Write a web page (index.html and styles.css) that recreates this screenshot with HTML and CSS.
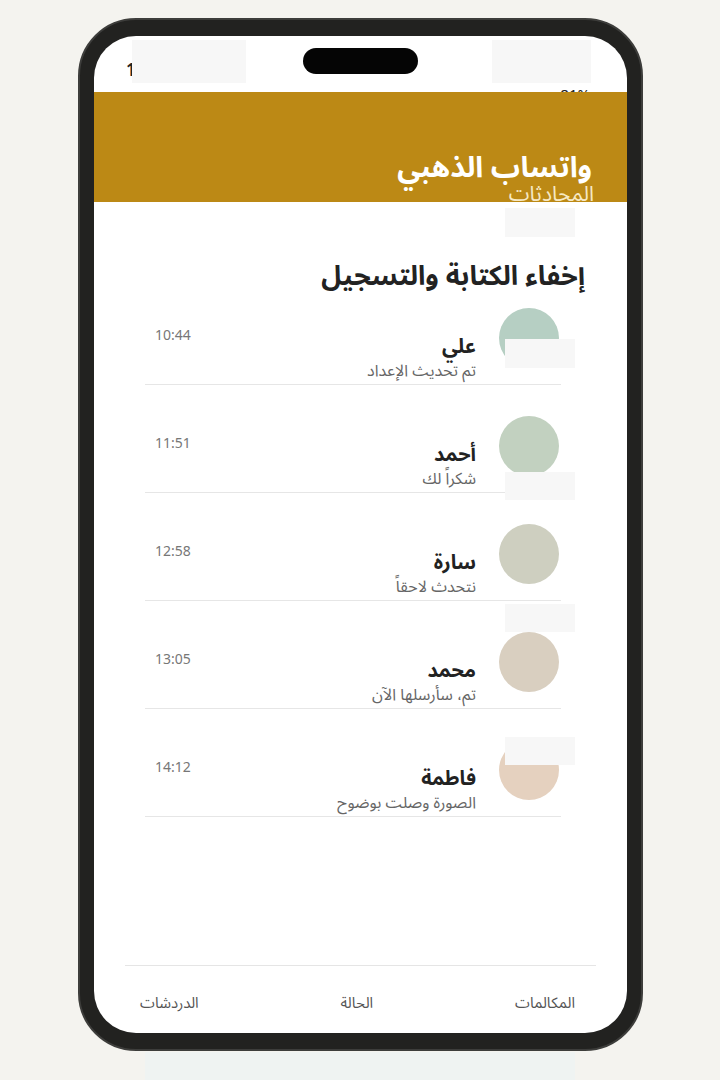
FILE: index.html
```html
<!DOCTYPE html>
<html lang="ar">
<head>
<meta charset="utf-8">
<title>واتساب الذهبي</title>
<link rel="stylesheet" href="styles.css">
</head>
<body>
<div class="phone">
  <div class="screen">
    <div class="island"></div>
    <div class="statusbar">
      <span class="time">10:44</span>
      <span class="battery">81%</span>
    </div>
    <header class="appbar">
      <div class="title">واتساب الذهبي</div>
      <div class="subtitle">المحادثات</div>
    </header>
    <main class="content">
      <h2 class="section">إخفاء الكتابة والتسجيل</h2>
      <ul class="chats">
        <li class="chat">
          <div class="avatar a1"></div>
          <div class="text"><div class="name">علي</div><div class="msg">تم تحديث الإعداد</div></div>
          <div class="when">10:44</div>
        </li>
        <li class="chat">
          <div class="avatar a2"></div>
          <div class="text"><div class="name">أحمد</div><div class="msg">شكراً لك</div></div>
          <div class="when">11:51</div>
        </li>
        <li class="chat">
          <div class="avatar a3"></div>
          <div class="text"><div class="name">سارة</div><div class="msg">نتحدث لاحقاً</div></div>
          <div class="when">12:58</div>
        </li>
        <li class="chat">
          <div class="avatar a4"></div>
          <div class="text"><div class="name">محمد</div><div class="msg">تم، سأرسلها الآن</div></div>
          <div class="when">13:05</div>
        </li>
        <li class="chat">
          <div class="avatar a5"></div>
          <div class="text"><div class="name">فاطمة</div><div class="msg">الصورة وصلت بوضوح</div></div>
          <div class="when">14:12</div>
        </li>
      </ul>
    </main>
    <nav class="tabs">
      <span class="tab">المكالمات</span>
      <span class="tab">الحالة</span>
      <span class="tab">الدردشات</span>
    </nav>
  </div>
</div>
<div class="mask m-tl"></div>
<div class="mask m-tr"></div>
<div class="mask m-c1"></div>
<div class="mask m-c2"></div>
<div class="mask m-c3"></div>
<div class="mask m-c4"></div>
<div class="mask m-c5"></div>
<div class="mask m-bottom"></div>
</body>
</html>
```
FILE: styles.css
```css
* { box-sizing: border-box; }
html, body { margin: 0; padding: 0; }
body {
  background: #f4f3ef;
  font-family: "Noto Sans", "Noto Sans Arabic", "Noto Kufi Arabic", "DejaVu Sans", sans-serif;
  width: 720px;
  height: 1080px;
  overflow: hidden;
  position: relative;
}
.phone {
  margin: 18px 0 0 78px;
  width: 565px;
  height: 1033px;
  background: #222220;
  border: 2px solid #3d3d3b;
  border-radius: 58px;
  padding: 16px 14px;
}
.screen {
  width: 100%;
  height: 100%;
  background: #fff;
  border-radius: 42px;
  overflow: hidden;
  position: relative;
  display: flex;
  flex-direction: column;
}
.island {
  position: absolute;
  top: 12px;
  left: 209px;
  width: 115px;
  height: 26px;
  background: #050505;
  border-radius: 13px;
  z-index: 3;
}
.statusbar {
  height: 56px;
  flex: none;
  display: flex;
  justify-content: space-between;
  padding: 0 37px 0 32px;
  color: #222;
  position: relative;
  z-index: 0;
}
.time { font-size: 17px; line-height: 20px; margin-top: 24px; font-weight: 600; }
.battery { font-size: 15px; line-height: 18px; margin-top: 49px; }
.appbar {
  height: 110px;
  flex: none;
  background: #bc8915;
  position: relative;
  z-index: 1;
  direction: rtl;
  padding: 0 35px 0 0;
  display: flex;
  flex-direction: column;
  justify-content: flex-end;
  overflow: hidden;
}
.title {
  color: #fff;
  font-size: 29px;
  font-weight: 700;
  line-height: 32px;
}
.subtitle {
  color: #f6e8c4;
  font-size: 21px;
  line-height: 22px;
  margin-bottom: -2px;
  margin-right: -2px;
}
.content {
  direction: rtl;
  flex: 1;
}
.section {
  margin: 54px 42px 0 0;
  font-size: 27px;
  line-height: 37px;
  font-weight: 700;
  color: #222;
}
.chats {
  list-style: none;
  margin: 0 66px 0 51px;
  padding: 0;
}
.chat {
  display: flex;
  align-items: flex-start;
  padding: 15px 2px 3px 10px;
  border-bottom: 1px solid #e6e6e6;
  margin-bottom: 16px;
}
.avatar {
  width: 60px;
  height: 60px;
  border-radius: 50%;
  flex: none;
}
.a1 { background: #b6cfc3; }
.a2 { background: #c2d1c0; }
.a3 { background: #cecfc0; }
.a4 { background: #d9cfc0; }
.a5 { background: #e5d1bf; }
.text {
  margin-right: 23px;
  margin-top: 25px;
  flex: 1;
}
.name {
  font-size: 20px;
  line-height: 26px;
  font-weight: 700;
  color: #222;
}
.msg {
  font-size: 16px;
  line-height: 22px;
  color: #666;
}
.when {
  direction: ltr;
  font-size: 14px;
  line-height: 18px;
  color: #777;
  margin-top: 18px;
}
.tabs {
  flex: none;
  height: 68px;
  margin: 0 31px;
  border-top: 1px solid #e5e5e5;
  direction: rtl;
  display: flex;
  justify-content: space-between;
  padding: 26px 21px 0 15px;
}
.tab {
  font-size: 15px;
  line-height: 20px;
  color: #555;
}
.mask {
  position: absolute;
  background: #f7f7f7;
}
.m-tl { left: 132px; top: 40px; width: 114px; height: 43px; }
.m-tr { left: 492px; top: 40px; width: 99px; height: 43px; }
.m-c1 { left: 505px; top: 208px; width: 70px; height: 29px; }
.m-c2 { left: 505px; top: 339px; width: 70px; height: 29px; }
.m-c3 { left: 505px; top: 472px; width: 70px; height: 28px; }
.m-c4 { left: 505px; top: 604px; width: 70px; height: 28px; }
.m-c5 { left: 505px; top: 737px; width: 70px; height: 28px; }
.m-bottom { left: 145px; top: 1052px; width: 430px; height: 28px; background: #eff3f2; }
```
